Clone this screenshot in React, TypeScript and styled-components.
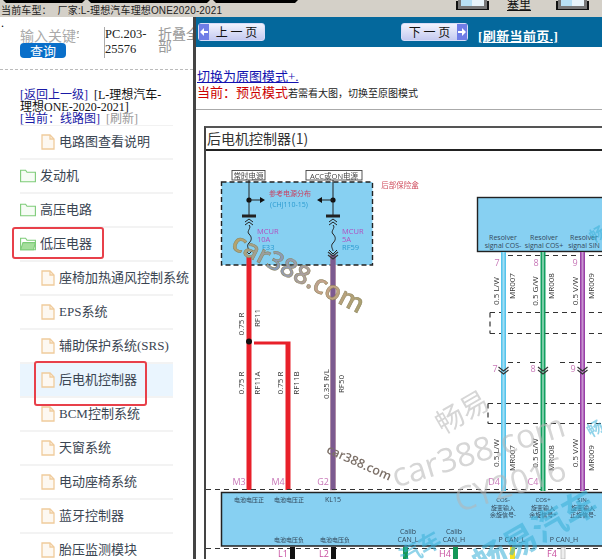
import React from "react";
import styled, { createGlobalStyle } from "styled-components";

const GlobalStyle = createGlobalStyle`
    html, body {
        margin: 0;
        padding: 0;
        overflow: hidden;
        background: #ffffff;
    }
`;

const CJK = `"Noto Sans CJK SC", "Noto Sans", sans-serif`;
const SERIF = `"Liberation Serif", "Noto Sans CJK SC", serif`;

const Page = styled.div`
    width: 602px;
    height: 559px;
    overflow: hidden;
    display: flex;
    flex-direction: column;
    font-family: ${SERIF};
`;

const TopBar = styled.div`
    height: 17px;
    flex: none;
    background: #d4d0c8;
    display: grid;
    overflow: hidden;
    > * {
        grid-area: 1 / 1;
    }
`;

const TabRow = styled.div`
    display: flex;
    gap: 3px;
    padding-left: 3px;
`;

const TabEdge = styled.div<{ $w: number }>`
    width: ${(p) => p.$w}px;
    height: 3px;
    background: #000000;
    clip-path: polygon(0 0, 100% 0, calc(100% - 3px) 100%, 3px 100%);
`;

const ToolRow = styled.div`
    display: flex;
    justify-content: flex-end;
    align-items: flex-start;
    padding-right: 15px;
`;

const ToolIcon = styled.div`
    width: 23px;
    height: 6px;
    background: linear-gradient(90deg, #b8e0f4 50%, #e8f4fa 50%);
    border: 3px solid #777777;
    border-top: 0;
    box-shadow: -2px 1px 0 #111111, 2px 1px 0 #111111;
`;

const ToolLabel = styled.a`
    margin: 0 27px 0 20px;
    font: 12px/8px ${CJK};
    color: #111111;
    text-decoration: underline;
`;

const CarTitle = styled.div`
    align-self: end;
    font: 10px/12px "Liberation Sans", ${CJK};
    letter-spacing: 0.15px;
    color: #222222;
    padding-left: 1px;
    white-space: pre;
`;

const Body = styled.div`
    flex: 1;
    display: flex;
    min-height: 0;
`;

const Sidebar = styled.div`
    width: 193px;
    flex: none;
    border-right: 3px solid #444444;
    overflow: hidden;
`;

const Dot = styled.div`
    font: 12px/12px ${SERIF};
    height: 0;
    padding-left: 1px;
`;

const SearchRow = styled.div`
    display: flex;
    padding: 10px 0 0 20px;
    height: 42px;
    border-bottom: 1px dashed #bbbbbb;
`;

const SearchColumn = styled.div`
    width: 59px;
    flex: none;
    overflow: hidden;
`;

const Keyword = styled.div`
    font: 14px/16px ${CJK};
    color: #aaaaaa;
    white-space: nowrap;
`;

const QueryButton = styled.button`
    display: block;
    width: 46px;
    height: 15px;
    padding: 0;
    border: 0;
    border-radius: 4px;
    background: #0a6fc9;
    color: #ffffff;
    font: 13px/15px ${CJK};
`;

const PartNo = styled.div`
    width: 52px;
    height: 31px;
    margin-left: 25px;
    flex: none;
    border-left: 1px solid #aaaaaa;
    font: 12.5px/15px ${SERIF};
    color: #222222;
`;

const FoldAll = styled.div`
    margin-left: 1px;
    font: 14px/12px ${CJK};
    color: #999999;
    width: 43px;
    flex: none;
    word-break: break-all;
`;

const Crumbs = styled.div`
    margin: 19px 23px 0 20px;
    font: 12px/12px ${SERIF};
    color: #111111;
`;

const CrumbLink = styled.a<{ $muted?: boolean }>`
    color: ${(p) => (p.$muted ? "#999999" : "#1a1aa6")};
`;

const TreeList = styled.div`
    margin: 0 20px;
    border-top: 1px solid #f2f2f2;
`;

const Row = styled.div<{ $depth: number; $active?: boolean }>`
    position: relative;
    height: 34px;
    box-sizing: border-box;
    display: flex;
    align-items: center;
    gap: 4px;
    padding-left: ${(p) => (p.$depth ? 21 : 0)}px;
    border-bottom: 2px solid #f3f3f3;
    background: ${(p) => (p.$active ? "#eaf5fe" : "transparent")};
    font: 13px/16px ${SERIF};
    color: #3a4552;
    white-space: nowrap;

    svg {
        flex: none;
    }
`;

const RedBox = styled.div<{ $l: number; $t: number; $w: number; $h: number }>`
    position: absolute;
    left: ${(p) => p.$l}px;
    top: ${(p) => p.$t}px;
    width: ${(p) => p.$w}px;
    height: ${(p) => p.$h}px;
    box-sizing: border-box;
    border: 2px solid #e8404a;
    border-radius: 3px;
`;

const Content = styled.div`
    flex: 1;
    min-width: 0;
    overflow: hidden;
`;

const PagerBar = styled.div`
    height: 30px;
    background: #04689c;
    display: flex;
    align-items: center;
    padding-left: 2px;
`;

const PagerButton = styled.div<{ $next?: boolean }>`
    width: 67px;
    height: 18px;
    box-sizing: border-box;
    border: 1px solid #d8dcf8;
    border-radius: 3px;
    background: linear-gradient(180deg, #f2f3fd 0%, #c4caf0 100%);
    display: flex;
    flex-direction: ${(p) => (p.$next ? "row-reverse" : "row")};
    align-items: stretch;
    margin-left: ${(p) => (p.$next ? "136px" : "0")};
    font: 12px/16px ${CJK};
    color: #111111;
    white-space: pre;
`;

const PagerArrow = styled.span`
    width: 10px;
    background: #6f7de6;
    display: flex;
    align-items: center;
    justify-content: center;
`;

const PagerText = styled.span`
    flex: 1;
    text-align: center;
`;

const RefreshLink = styled.a`
    margin-left: 10px;
    margin-top: 10px;
    color: #ffffff;
    font: bold 13px/16px ${SERIF};
    letter-spacing: 0.4px;
    text-decoration: underline;
    white-space: nowrap;
`;

const ModeBlock = styled.div`
    padding: 22px 0 0 1px;
    height: 40px;
    border-bottom: 1px solid #aaaaaa;
`;

const ModeLink = styled.a`
    display: block;
    font: 13px/15px ${SERIF};
    color: #1212b0;
    text-decoration: underline;
`;

const ModeLine = styled.div`
    font: 400 13px/15px ${CJK};
    color: #cc0000;
    white-space: nowrap;
`;

const ModeHint = styled.span`
    font: 10px/15px ${CJK};
    color: #222222;
`;

const Frame = styled.div`
    margin: 16px 0 0 8px;
    border-left: 2px solid #444444;
    border-top: 2px solid #555555;
`;

const FrameTitle = styled.div`
    height: 21px;
    border-bottom: 2px solid #222222;
    font: 14px/20px ${CJK};
    color: #333333;
    padding-left: 1px;
    white-space: nowrap;
`;

const Diagram = styled.svg`
    display: block;
    filter: blur(0.35px);
`;

const FolderIcon = ({ open }: { open?: boolean }) => (
    <svg width="16" height="14" viewBox="0 0 16 14" fill="none" stroke="#7dcb78" strokeWidth="1.1">
        <path d="M.6 12.8V1.2h5l1.4 2h8.4v9.6z" fill={open ? "none" : "#f6fcf5"} />
        {open && <path d="M.6 12.8 3 5.6h12.4l-2 7.2z" fill="#a5de9c" />}
    </svg>
);

const FileIcon = () => (
    <svg width="14" height="16" viewBox="0 0 14 16" fill="#fdf8f1" stroke="#f0cb9c" strokeWidth="1.3">
        <path d="M1 1h8l4 4v10H1z" />
        <path d="M9 1v4h4" fill="none" />
    </svg>
);

const ArrowIcon = ({ flip }: { flip?: boolean }) => (
    <svg width="8" height="8" viewBox="0 0 8 8" fill="#ffffff" style={flip ? { transform: "scaleX(-1)" } : undefined}>
        <path d="M8 3H4V0L0 4l4 4V5h4z" />
    </svg>
);

const treeRows: { name: string; depth: number; open?: boolean; active?: boolean; box?: [number, number, number, number] }[] = [
    { name: "电路图查看说明", depth: 1 },
    { name: "发动机", depth: 0 },
    { name: "高压电路", depth: 0 },
    { name: "低压电器", depth: 0, open: true, box: [-8, -1, 92, 32] },
    { name: "座椅加热通风控制系统", depth: 1 },
    { name: "EPS系统", depth: 1 },
    { name: "辅助保护系统(SRS)", depth: 1 },
    { name: "后电机控制器", depth: 1, active: true, box: [14, -3, 113, 45] },
    { name: "BCM控制系统", depth: 1 },
    { name: "天窗系统", depth: 1 },
    { name: "电动座椅系统", depth: 1 },
    { name: "蓝牙控制器", depth: 1 },
    { name: "胎压监测模块", depth: 1 },
];

// 线束标注,竖排文字
const VLabel = ({ x, y, children }: { x: number; y: number; children: string }) => (
    <text x={x} y={y} fontSize="8" fill="#333" transform={`rotate(-90 ${x} ${y})`} textAnchor="middle">
        {children}
    </text>
);

const Label = ({ x, y, size = 7, fill = "#33485a", children }: { x: number; y: number; size?: number; fill?: string; children: string }) => (
    <text x={x} y={y} fontSize={size} fill={fill} textAnchor="middle">
        {children}
    </text>
);

const Wire = ({ x, y1, y2, color, core = "#ffffff" }: { x: number; y1: number; y2: number; color: string; core?: string }) => (
    <g>
        <rect x={x - 2.5} y={y1} width="5" height={y2 - y1} fill={color} />
        <rect x={x - 1} y={y1} width="2" height={y2 - y1} fill={core} opacity="0.45" />
    </g>
);

const Chevron = ({ x, y }: { x: number; y: number }) => (
    <path d={`M${x - 5} ${y}l5 4 5-4M${x - 5} ${y + 3}l5 4 5-4`} fill="none" stroke="#333" strokeWidth="1.2" />
);

const Fuse = ({ x }: { x: number }) => (
    <g fill="none" stroke="#222" strokeWidth="1">
        <path d={`M${x} 180V216`} />
        <path d={`M${x - 7} 216h14`} strokeWidth="3" />
        <path d={`M${x - 4} 222l4-3 4 3M${x - 4} 225l4-3 4 3`} />
        <path d={`M${x} 225c3 3-3 6 0 9s3 6 0 9 0 6 0 8`} />
        <path d={`M${x - 4} 250l4 4 4-4`} />
        <circle cx={x} cy="200" r="2.6" fill="#111" stroke="none" />
    </g>
);

const Dash = ({ d }: { d: string }) => <path d={d} fill="none" stroke="#333" strokeWidth="1.2" strokeDasharray="5 4" />;

const WiringDiagram = () => (
    <Diagram width="396" height="408" viewBox="206 151 396 408" fontFamily={`"Open Sans", "Noto Sans CJK SC", sans-serif`}>
        <defs>
            <linearGradient id="wm" x1="0" y1="0" x2="1" y2="0">
                <stop offset="0" stopColor="#b8a468" />
                <stop offset="0.35" stopColor="#8a9bb8" />
                <stop offset="0.7" stopColor="#c8a488" />
                <stop offset="1" stopColor="#a8a070" />
            </linearGradient>
        </defs>

        <rect x="221.5" y="182" width="151" height="83" fill="#87d0f2" stroke="#222" strokeWidth="1.4" strokeDasharray="5 3" />
        <g fill="#fff" stroke="#444" strokeWidth="0.9">
            <rect x="232" y="170.5" width="33" height="9.5" />
            <rect x="306" y="170.5" width="56" height="9.5" />
        </g>
        <Label x={248.5} y={178.5} size={7.5} fill="#444">常时电源</Label>
        <Label x={334} y={178.5} size={7.5} fill="#444">ACC或ON电源</Label>
        <Label x={400} y={188} size={7.5} fill="#d05060">后部保险盒</Label>
        <Fuse x={249} />
        <Fuse x={333} />
        <path d="M249 200h14M333 200h-14" stroke="#222" strokeWidth="1" />
        <path d="M260 197l5 3-5 3zM322 197l-5 3 5 3z" fill="#111" />
        <Label x={290} y={196} size={7} fill="#c84060">参考电源分布</Label>
        <Label x={289} y={207} size={7} fill="#2a9ad0">(CHJ110-15)</Label>
        <g fontSize="7.5" fill="#b050c0">
            <text x="257" y="234">MCUR</text>
            <text x="257" y="242">10A</text>
            <text x="342" y="234">MCUR</text>
            <text x="342" y="242">5A</text>
        </g>
        <g fontSize="7.5" fill="#2a9ad0">
            <text x="262" y="250">F33</text>
            <text x="342" y="250">RF59</text>
        </g>

        <rect x="246.5" y="257" width="5" height="233" fill="#e8202a" />
        <path d="M254 341.5h36.5V490h-5V344.500h-31.500z" fill="#e8202a" />
        <circle cx="249" cy="341.500" r="3" fill="#111" />
        <rect x="330.500" y="255" width="5" height="235" fill="#7c5a90" stroke="#a0708a" strokeWidth="0.5" />
        <Chevron x={333} y={252} />
        <VLabel x={244} y={324}>0.75 R</VLabel>
        <VLabel x={260} y={318}>RF11</VLabel>
        <VLabel x={244} y={383}>0.75 R</VLabel>
        <VLabel x={260} y={383}>RF11A</VLabel>
        <VLabel x={283} y={383}>0.75 R</VLabel>
        <VLabel x={299} y={383}>RF11B</VLabel>
        <VLabel x={329} y={384}>0.35 R/L</VLabel>
        <VLabel x={344} y={384}>RF50</VLabel>

        <rect x="477.500" y="197.500" width="130" height="54" fill="#87d0f2" stroke="#222" strokeWidth="1.4" />
        <Label x={503} y={240}>Resolver</Label>
        <Label x={503} y={248}>signal COS-</Label>
        <Label x={544} y={240}>Resolver</Label>
        <Label x={544} y={248}>signal COS+</Label>
        <Label x={584} y={240}>Resolver</Label>
        <Label x={584} y={248}>signal SIN</Label>

        <Dash d="M508 255.500h94M490 312.500h112M490 333.500h112M490 312.500v21M508 362.500h12M530 362.500h12M560 362.500h42M488 403.500h114M488 423.500h114M488 403.500v20M206 489.500h396" />
        <Wire x={503.500} y1={252} y2={491} color="#56c4ec" />
        <Wire x={543} y1={252} y2={491} color="#12a060" />
        <Wire x={582.500} y1={252} y2={491} color="#9a40a8" />
        <Chevron x={503.500} y={367} />
        <Chevron x={543} y={367} />
        <Chevron x={582.500} y={367} />
        <g fontSize="9" fill="#c878b8" textAnchor="middle">
            <text x="497" y="266">7</text>
            <text x="536" y="266">8</text>
            <text x="575" y="266">9</text>
            <text x="495" y="372">7</text>
            <text x="533" y="372">8</text>
            <text x="573" y="372">9</text>
            <text x="494" y="485">D4</text>
            <text x="533" y="485">C4</text>
            <text x="239" y="485">M3</text>
            <text x="278" y="485">M4</text>
            <text x="323" y="485">G2</text>
        </g>
        <VLabel x={499} y={291}>0.5 L/W</VLabel>
        <VLabel x={515} y={286}>MR007</VLabel>
        <VLabel x={538} y={291}>0.5 G/W</VLabel>
        <VLabel x={554} y={286}>MR008</VLabel>
        <VLabel x={578} y={291}>0.5 V/W</VLabel>
        <VLabel x={594} y={286}>MR009</VLabel>
        <VLabel x={499} y={453}>0.5 L/W</VLabel>
        <VLabel x={515} y={458}>MR007</VLabel>
        <VLabel x={538} y={453}>0.5 G/W</VLabel>
        <VLabel x={554} y={458}>MR008</VLabel>
        <VLabel x={578} y={453}>0.5 V/W</VLabel>
        <VLabel x={594} y={458}>MR009</VLabel>

        <rect x="221.500" y="492.500" width="390" height="53.500" fill="#87d0f2" stroke="#222" strokeWidth="1.5" />
        <Label x={249} y={502} size={6}>电池电压正</Label>
        <Label x={289} y={502} size={6}>电池电压正</Label>
        <Label x={333} y={502}>KL15</Label>
        <Label x={289} y={542} size={6}>电池电压负</Label>
        <Label x={335} y={542} size={6}>电池电压负</Label>
        <Label x={503} y={502} size={6}>COS-</Label>
        <Label x={503} y={510} size={6}>旋变输入</Label>
        <Label x={503} y={517} size={6}>余旋信号-</Label>
        <Label x={543} y={502} size={6}>COS+</Label>
        <Label x={543} y={510} size={6}>旋变输入</Label>
        <Label x={543} y={517} size={6}>余旋信号+</Label>
        <Label x={583} y={502} size={6}>SIN-</Label>
        <Label x={583} y={510} size={6}>旋变输入</Label>
        <Label x={583} y={517} size={6}>正旋信号-</Label>
        <Label x={408} y={534}>Calib</Label>
        <Label x={408} y={542}>CAN_L</Label>
        <Label x={454} y={534}>Calib</Label>
        <Label x={454} y={542}>CAN_H</Label>
        <Label x={512} y={542}>P CAN_L</Label>
        <Label x={564} y={542}>P CAN_H</Label>
        <Dash d="M206 548.500h396" />
        <rect x="290" y="547" width="5" height="12" fill="#111" />
        <rect x="331" y="547" width="5" height="12" fill="#111" />
        <rect x="403" y="547" width="5" height="12" fill="#149858" />
        <rect x="453" y="547" width="5" height="12" fill="#149858" />
        <rect x="510" y="547" width="5" height="12" fill="#f4e020" />
        <rect x="561" y="547" width="4" height="12" fill="#eeeeee" stroke="#999" strokeWidth="0.5" />
        <g fontSize="9" fill="#c850a0" textAnchor="middle">
            <text x="283" y="557">L1</text>
            <text x="324" y="557">L2</text>
            <text x="445" y="557">H4</text>
            <text x="552" y="557">F4</text>
        </g>

        <text x="299" y="282" fontSize="26" fontWeight="600" textAnchor="middle" fill="url(#wm)" stroke="#8a8058" strokeWidth="0.5" transform="rotate(27 299 272)">
            car388.com
        </text>
        <text x="359" y="467" fontSize="12.5" fontWeight="600" textAnchor="middle" fill="#7c7068" transform="rotate(24 359 463)">
            car388.com
        </text>
        <g fill="#b4b4b4" opacity="0.55" textAnchor="middle">
            <text x="462" y="422" fontSize="28" transform="rotate(-30 462 412)">畅易</text>
            <text x="478" y="462" fontSize="33" transform="rotate(-17 478 450)">car388.com</text>
            <text x="510" y="496" fontSize="33" transform="rotate(-17 510 484)">CY2016</text>
        </g>
        <g fill="#38b0d8" opacity="0.55" textAnchor="middle" fontWeight="700">
            <text x="535" y="545" fontSize="34" transform="rotate(-30 535 533)">畅易汽车</text>
            <text x="420" y="556" fontSize="22" transform="rotate(-30 420 548)">汽车</text>
            <text x="598" y="240" fontSize="16" transform="rotate(-30 598 235)">畅</text>
            <text x="596" y="434" fontSize="16" transform="rotate(-30 596 430)">畅</text>
        </g>
    </Diagram>
);

const App = () => {
    return (
        <Page>
            <GlobalStyle />
            <TopBar>
                <TabRow>
                    <TabEdge $w={82} />
                    <TabEdge $w={122} />
                    <TabEdge $w={85} />
                </TabRow>
                <ToolRow>
                    <ToolIcon />
                    <ToolLabel>塞里</ToolLabel>
                    <ToolIcon />
                </ToolRow>
                <CarTitle>当前车型：  厂家:L-理想汽车理想ONE2020-2021</CarTitle>
            </TopBar>
            <Body>
                <Sidebar>
                    <Dot>.</Dot>
                    <SearchRow>
                        <SearchColumn>
                            <Keyword>输入关键字</Keyword>
                            <QueryButton>查询</QueryButton>
                        </SearchColumn>
                        <PartNo>PC.203-25576</PartNo>
                        <FoldAll>折叠全部</FoldAll>
                    </SearchRow>
                    <Crumbs>
                        <CrumbLink>[返回上一级]</CrumbLink> &nbsp;[L-理想汽车-理想ONE-2020-2021]
                        <br />
                        <CrumbLink>[当前：线路图]</CrumbLink> &nbsp;<CrumbLink $muted>[刷新]</CrumbLink>
                    </Crumbs>
                    <TreeList>
                        {treeRows.map((row) => (
                            <Row key={row.name} $depth={row.depth} $active={row.active}>
                                {row.depth ? <FileIcon /> : <FolderIcon open={row.open} />}
                                <span>{row.name}</span>
                                {row.box && <RedBox $l={row.box[0]} $t={row.box[1]} $w={row.box[2]} $h={row.box[3]} />}
                            </Row>
                        ))}
                    </TreeList>
                </Sidebar>
                <Content>
                    <PagerBar>
                        <PagerButton>
                            <PagerArrow>
                                <ArrowIcon />
                            </PagerArrow>
                            <PagerText>上 一 页</PagerText>
                        </PagerButton>
                        <PagerButton $next>
                            <PagerArrow>
                                <ArrowIcon flip />
                            </PagerArrow>
                            <PagerText>下 一 页</PagerText>
                        </PagerButton>
                        <RefreshLink>[刷新当前页.]</RefreshLink>
                    </PagerBar>
                    <ModeBlock>
                        <ModeLink>切换为原图模式+.</ModeLink>
                        <ModeLine>
                            当前：预览模式<ModeHint>若需看大图，切换至原图模式</ModeHint>
                        </ModeLine>
                    </ModeBlock>
                    <Frame>
                        <FrameTitle>后电机控制器(1)</FrameTitle>
                        <WiringDiagram />
                    </Frame>
                </Content>
            </Body>
        </Page>
    );
};

export default App;
